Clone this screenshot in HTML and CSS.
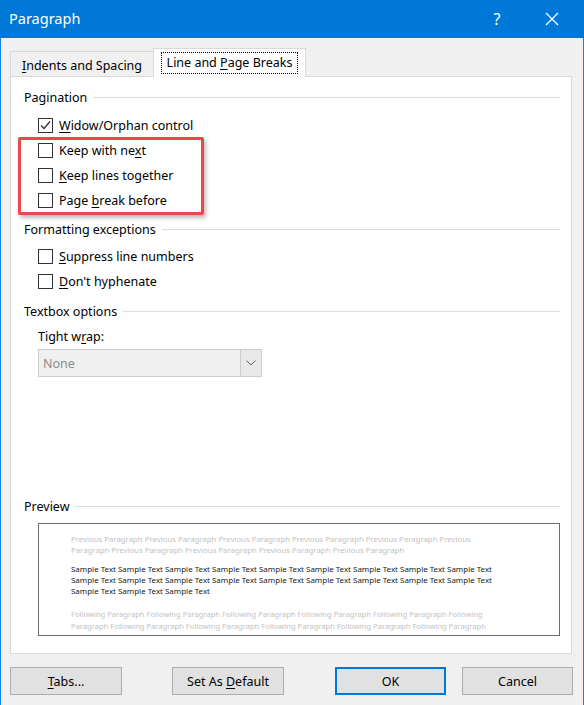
FILE: index.html
```html
<!DOCTYPE html>
<html>
<head>
<meta charset="utf-8">
<link rel="stylesheet" href="styles.css">
</head>
<body>
<div class="window">
  <div class="titlebar">
    <span class="title">Paragraph</span>
    <span class="help">?</span>
    <span class="close">
      <svg width="14" height="14" viewBox="0 0 14 14"><path d="M1 1 L13 13 M13 1 L1 13" stroke="#fff" stroke-width="1.2" fill="none"/></svg>
    </span>
  </div>
  <div class="tabs">
    <div class="tab"><span class="label"><u>I</u>ndents and Spacing</span></div>
    <div class="tab active"><span class="label focus">Line and <u>P</u>age Breaks</span></div>
  </div>
  <div class="panel">
    <div class="group-head first"><span>Pagination</span><i class="rule"></i></div>
    <div class="checks">
      <div class="row"><span class="box"><svg width="13" height="13" viewBox="0 0 13 13"><path d="M2 6.5 L5 9.5 L11 2.5" stroke="#333" stroke-width="1.3" fill="none"/></svg></span><span><u>W</u>idow/Orphan control</span></div>
      <div class="row"><span class="box"></span><span>Keep with ne<u>x</u>t</span></div>
      <div class="row"><span class="box"></span><span><u>K</u>eep lines together</span></div>
      <div class="row"><span class="box"></span><span>Page <u>b</u>reak before</span></div>
    </div>
    <div class="group-head g2"><span>Formatting exceptions</span><i class="rule"></i></div>
    <div class="checks c2">
      <div class="row"><span class="box"></span><span><u>S</u>uppress line numbers</span></div>
      <div class="row"><span class="box"></span><span><u>D</u>on't hyphenate</span></div>
    </div>
    <div class="group-head g3"><span>Textbox options</span><i class="rule"></i></div>
    <div class="field-label">Tight w<u>r</u>ap:</div>
    <div class="combo">
      <span class="combo-text">None</span>
      <span class="combo-arrow"><svg width="10" height="6" viewBox="0 0 10 6"><path d="M0.5 0.5 L5 5 L9.5 0.5" stroke="#666" stroke-width="1" fill="none"/></svg></span>
    </div>
    <div class="group-head g4"><span>Preview</span><i class="rule"></i></div>
    <div class="preview">
      <div class="para prev">
        <div>Previous Paragraph Previous Paragraph Previous Paragraph Previous Paragraph Previous Paragraph Previous</div>
        <div>Paragraph Previous Paragraph Previous Paragraph Previous Paragraph Previous Paragraph</div>
      </div>
      <div class="para sample">
        <div>Sample Text Sample Text Sample Text Sample Text Sample Text Sample Text Sample Text Sample Text Sample Text</div>
        <div>Sample Text Sample Text Sample Text Sample Text Sample Text Sample Text Sample Text Sample Text Sample Text</div>
        <div>Sample Text Sample Text Sample Text</div>
      </div>
      <div class="para prev follow">
        <div>Following Paragraph Following Paragraph Following Paragraph Following Paragraph Following Paragraph Following</div>
        <div>Paragraph Following Paragraph Following Paragraph Following Paragraph Following Paragraph Following Paragraph</div>
      </div>
    </div>
  </div>
  <div class="buttons">
    <button class="btn b-tabs"><u>T</u>abs...</button>
    <button class="btn b-default">Set As <u>D</u>efault</button>
    <button class="btn b-ok">OK</button>
    <button class="btn b-cancel">Cancel</button>
  </div>
  <div class="highlight"></div>
</div>
</body>
</html>
```
FILE: styles.css
```css
* { box-sizing: border-box; }
html, body { margin: 0; padding: 0; }
body {
  width: 584px;
  height: 705px;
  overflow: hidden;
  font-family: "Noto Sans", "Open Sans", sans-serif;
  font-size: 12.5px;
  color: #000;
  background: #f0f0f0;
}
u { text-decoration: underline; text-underline-offset: 2px; text-decoration-thickness: 1px; }
.window {
  position: relative;
  width: 584px;
  height: 705px;
  background: #f0f0f0;
  border-left: 1px solid #1a7fd4;
  border-right: 1px solid #1a7fd4;
}
.titlebar {
  height: 38px;
  background: #0078d7;
  color: #fff;
  display: flex;
  align-items: center;
  padding-left: 9px;
  margin: 0 -1px;
  padding-right: 25px;
}
.title { font-size: 14.5px; flex: 1; padding-bottom: 2px; }
.help { font-size: 16px; width: 20px; text-align: center; margin-right: 38px; }
.close { display: flex; align-items: center; }

.tabs {
  display: flex;
  align-items: flex-end;
  height: 28px;
  margin-top: 10px;
  margin-left: 9px;
}
.tab {
  height: 25px;
  width: 144px;
  border: 1px solid #d9d9d9;
  border-bottom: none;
  display: flex;
  align-items: center;
  justify-content: center;
  background: #f0f0f0;
  padding-top: 3px;
}
.tab.active {
  height: 29px;
  width: 153px;
  margin-left: -1px;
  margin-bottom: -1px;
  background: #fff;
  position: relative;
  z-index: 1;
  padding-top: 0;
}
.focus {
  outline: 1px dotted #000;
  padding: 1px 5px 2px;
}
.panel {
  margin: 0 11px 0 9px;
  height: 578px;
  border: 1px solid #d9d9d9;
  background: #fff;
  padding-left: 13px;
}
.group-head {
  display: flex;
  align-items: center;
  height: 20px;
  gap: 6px;
  margin-right: 11px;
}
.group-head.first { margin-top: 10px; }
.group-head.g2 { margin-top: 6px; }
.group-head.g3 { margin-top: 7px; }
.group-head.g4 { margin-top: 119px; }
.rule { flex: 1; height: 1px; background: #dcdcdc; }

.checks { margin-top: 6px; padding-left: 14px; }
.checks.c2 { margin-top: 5px; }
.row { height: 25px; display: flex; align-items: center; gap: 6px; }
.box {
  width: 15px;
  height: 15px;
  border: 1px solid #333;
  background: #fff;
  display: flex;
  align-items: center;
  justify-content: center;
}
.field-label { margin-top: 6px; height: 20px; line-height: 20px; padding-left: 14px; }
.combo {
  margin-top: 2px;
  margin-left: 14px;
  width: 224px;
  height: 28px;
  border: 1px solid #cccccc;
  background: #f0f0f0;
  display: flex;
}
.combo-text { flex: 1; color: #8a8a8a; display: flex; align-items: center; padding-left: 4px; }
.combo-arrow {
  width: 21px;
  border-left: 1px solid #cccccc;
  background: #e8e8e8;
  display: flex;
  align-items: center;
  justify-content: center;
}
.preview {
  margin-top: 7px;
  margin-left: 14px;
  margin-right: 11px;
  height: 113px;
  border: 1px solid #6d6d6d;
  background: #fff;
  padding: 10px 0 0 32px;
  font-size: 7.8px;
  line-height: 11px;
  white-space: nowrap;
}
.para { margin-bottom: 8px; }
.sample { margin-bottom: 11px; }
.prev { color: #c2c2c2; }
.follow { font-size: 7.6px; line-height: 12px; }
.sample { color: #222; font-size: 7.95px; }

.buttons {
  display: flex;
  margin-top: 13px;
  padding-left: 9px;
}
.btn {
  font-family: inherit;
  font-size: 12.5px;
  height: 28px;
  width: 112px;
  background: #e1e1e1;
  border: 1px solid #adadad;
  color: #000;
  padding: 0;
}
.b-default { margin-left: 50px; }
.b-ok { margin-left: 51px; width: 111px; border: 2px solid #0078d7; }
.b-cancel { margin-left: 16px; width: 111px; }
.highlight {
  position: absolute;
  left: 17px;
  top: 137px;
  width: 186px;
  height: 78px;
  border: 3px solid #e8474b;
  border-radius: 2px;
  box-shadow: 2px 3px 4px rgba(0,0,0,0.28);
}
```
